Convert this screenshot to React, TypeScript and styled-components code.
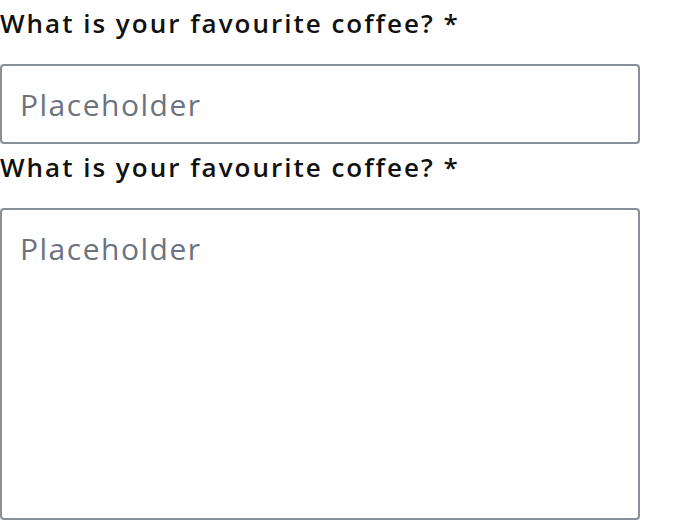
import React from "react";
import styled, { createGlobalStyle } from "styled-components";

const GlobalStyle = createGlobalStyle`
    body {
        margin: 0;
        background: #fff;
        font-family: "Open Sans", "Liberation Sans", sans-serif;
    }
`;

const Form = styled.div`
    width: 640px;
    display: flex;
    flex-direction: column;
`;

const Label = styled.label`
    display: block;
    height: 64px;
    line-height: 46px;
    font-size: 26px;
    font-weight: 600;
    letter-spacing: 2px;
    color: #111;
    white-space: nowrap;
`;

const fieldCss = `
    box-sizing: border-box;
    width: 640px;
    margin: 0;
    border: 2px solid #8a9099;
    border-radius: 4px;
    padding: 0 18px;
    font-family: "Open Sans", "Liberation Sans", sans-serif;
    font-size: 30px;
    letter-spacing: 1.5px;
    line-height: normal;
    color: #111;
    background: #fff;
    outline: none;
    &::placeholder {
        color: #6b7380;
        opacity: 1;
    }
`;

const Input = styled.input`
    ${fieldCss}
    height: 80px;
    display: block;
`;

const TextArea = styled.textarea`
    ${fieldCss}
    height: 312px;
    display: block;
    padding-top: 18px;
    resize: none;
`;

const App = () => {
    return (
        <>
            <GlobalStyle />
            <Form>
                <Label htmlFor="coffee-1">What is your favourite coffee? *</Label>
                <Input id="coffee-1" placeholder="Placeholder" />
                <Label htmlFor="coffee-2">What is your favourite coffee? *</Label>
                <TextArea id="coffee-2" placeholder="Placeholder" />
            </Form>
        </>
    );
};

export default App;
